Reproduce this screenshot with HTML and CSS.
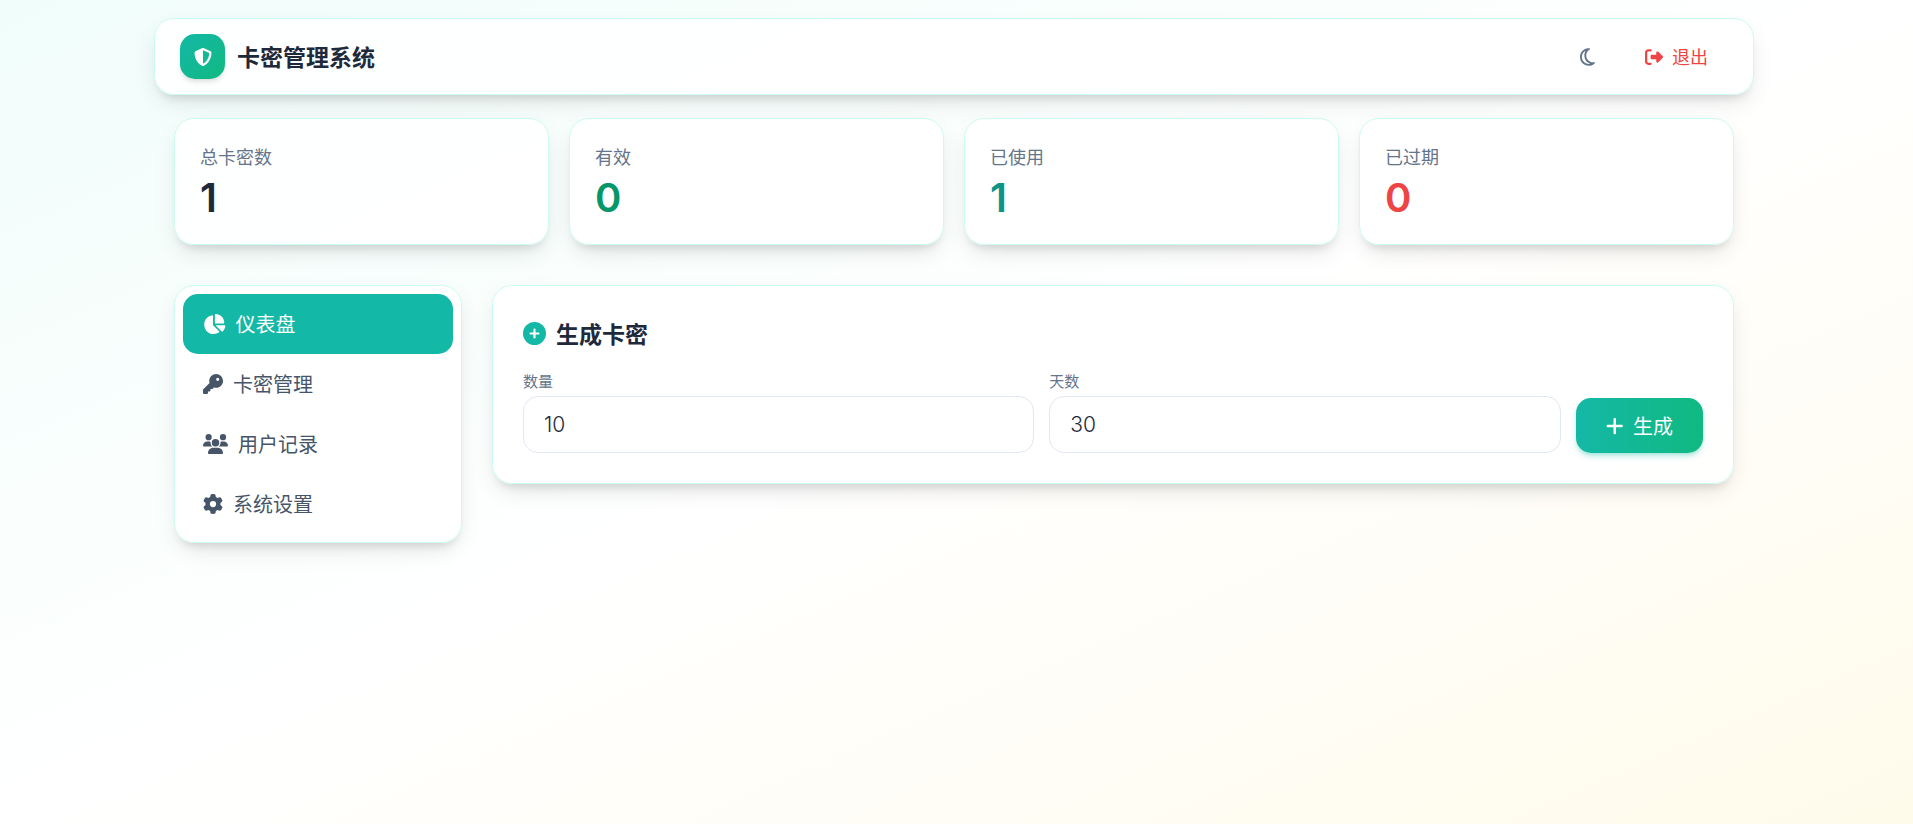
FILE: index.html
```
<!DOCTYPE html>
<html lang="zh-CN">

<head>
    <meta charset="UTF-8">
    <meta name="viewport" content="width=device-width, initial-scale=1.0">
    <title>卡密管理系统</title>
    <link rel="stylesheet" href="styles.css">
</head>

<body>
    <!-- Header -->
    <header class="header card">
        <div class="brand">
            <span class="logo">
                <svg class="icon" viewBox="0 0 512 512"><path d="M256 0c4.6 0 9.2 1 13.4 2.9L457.7 82.8c22 9.3 38.4 31 38.3 57.2c-.5 99.2-41.3 280.7-213.6 363.2c-16.7 8-36.1 8-52.8 0C57.3 420.7 16.5 239.2 16 140c-.1-26.2 16.3-47.9 38.3-57.2L242.7 2.9C246.8 1 251.4 0 256 0zm0 66.8V444.8C394 378 431.1 230.1 432 141.4L256 66.8l0 0z"/></svg>
            </span>
            <h1>卡密管理系统</h1>
        </div>
        <div class="actions">
            <button class="theme-btn" id="themeBtn" aria-label="切换主题">
                <svg class="icon" viewBox="0 0 384 512"><path d="M144.7 98.7c-21 34.1-33.1 74.3-33.1 117.3c0 98 62.8 181.4 150.4 211.7c-12.4 2.8-25.3 4.3-38.6 4.3C126.6 432 48 353.3 48 256c0-68.9 39.4-128.4 96.8-157.3zm62.1-66C91.1 41.2 0 137.9 0 256C0 379.7 100 480 223.5 480c47.8 0 92-15 128.4-40.6c1.9-1.3 3.7-2.7 5.5-4c4.8-3.6 9.4-7.4 13.9-11.4c2.7-2.4 5.3-4.8 7.9-7.3c5-4.9 6.3-12.5 3.1-18.7s-10.1-9.7-17-8.5c-3.7 .6-7.4 1.2-11.1 1.6c-5 .5-10.1 .9-15.3 1c-1.2 0-2.5 0-3.7 0l-.3 0c-96.8-.2-175.2-78.9-175.2-176c0-54.8 24.9-103.7 64.1-136c1-.9 2.1-1.7 3.2-2.6c4-3.2 8.2-6.2 12.5-9c3.1-2 6.3-4 9.6-5.8c6.1-3.5 9.2-10.5 7.7-17.3s-7.3-11.9-14.3-12.5c-3.6-.3-7.1-.5-10.7-.6c-2.7-.1-5.5-.1-8.2-.1c-3.3 0-6.5 .1-9.8 .2c-2.3 .1-4.6 .2-6.9 .4z"/></svg>
            </button>
            <button class="logout-btn" id="logoutBtn">
                <svg class="icon" viewBox="0 0 512 512"><path d="M377.9 105.9L500.7 228.7c7.2 7.2 11.3 17.1 11.3 27.3s-4.1 20.1-11.3 27.3L377.9 406.1c-6.4 6.4-15 9.9-24 9.9c-18.7 0-33.9-15.2-33.9-33.9l0-62.1-128 0c-17.7 0-32-14.3-32-32l0-64c0-17.7 14.3-32 32-32l128 0 0-62.1c0-18.7 15.2-33.9 33.9-33.9c9 0 17.6 3.6 24 9.9zM160 96L96 96c-17.7 0-32 14.3-32 32l0 256c0 17.7 14.3 32 32 32l64 0c17.7 0 32 14.3 32 32s-14.3 32-32 32l-64 0c-53 0-96-43-96-96L0 128C0 75 43 32 96 32l64 0c17.7 0 32 14.3 32 32s-14.3 32-32 32z"/></svg>
                退出
            </button>
        </div>
    </header>

    <main class="container">
        <!-- Stats -->
        <section class="stats">
            <div class="stat card">
                <p>总卡密数</p>
                <strong>1</strong>
            </div>
            <div class="stat card">
                <p>有效</p>
                <strong class="green">0</strong>
            </div>
            <div class="stat card">
                <p>已使用</p>
                <strong class="teal">1</strong>
            </div>
            <div class="stat card">
                <p>已过期</p>
                <strong class="red">0</strong>
            </div>
        </section>

        <div class="layout">
            <!-- Sidebar -->
            <nav class="sidebar card">
                <a href="#dashboard" class="active">
                    <svg class="icon" viewBox="0 0 576 512"><path d="M304 240V16.6c0-9 7-16.6 16-16.6C443.7 0 544 100.3 544 224c0 9-7.6 16-16.6 16H304zM32 272C32 150.7 122.1 50.3 239 34.3c9.2-1.3 17 6.1 17 15.4V288L412.5 444.5c6.7 6.7 6.2 17.7-1.5 23.1C371.8 495.6 323.8 512 272 512C139.5 512 32 404.6 32 272zm526.4 16c9.3 0 16.6 7.8 15.4 17c-7.7 55.9-34.6 105.6-73.9 142.3c-6 5.6-15.4 5.2-21.2-.7L320 288H558.4z"/></svg>
                    仪表盘
                </a>
                <a href="#cards">
                    <svg class="icon" viewBox="0 0 512 512"><path d="M336 352c97.2 0 176-78.8 176-176S433.2 0 336 0S160 78.8 160 176c0 18.7 2.9 36.8 8.3 53.7L7 391c-4.5 4.5-7 10.6-7 17v80c0 13.3 10.7 24 24 24h80c13.3 0 24-10.7 24-24V448h40c13.3 0 24-10.7 24-24V384h40c6.4 0 12.5-2.5 17-7l33.3-33.3c16.9 5.4 35 8.3 53.7 8.3zM376 96a40 40 0 1 1 0 80 40 40 0 1 1 0-80z"/></svg>
                    卡密管理
                </a>
                <a href="#users">
                    <svg class="icon" viewBox="0 0 640 512"><path d="M144 0a80 80 0 1 1 0 160A80 80 0 1 1 144 0zM512 0a80 80 0 1 1 0 160A80 80 0 1 1 512 0zM0 298.7C0 239.8 47.8 192 106.7 192h42.7c15.9 0 31 3.5 44.6 9.7c-1.3 7.2-1.9 14.7-1.9 22.3c0 38.2 16.8 72.5 43.3 96c-.2 0-.4 0-.7 0H21.3C9.6 320 0 310.4 0 298.7zM405.3 320c-.2 0-.4 0-.7 0c26.6-23.5 43.3-57.8 43.3-96c0-7.6-.7-15-1.9-22.3c13.6-6.3 28.7-9.7 44.6-9.7h42.7C592.2 192 640 239.8 640 298.7c0 11.8-9.6 21.3-21.3 21.3H405.3zM224 224a96 96 0 1 1 192 0 96 96 0 1 1 -192 0zM128 485.3C128 411.7 187.7 352 261.3 352H378.7C452.3 352 512 411.7 512 485.3c0 14.7-11.9 26.7-26.7 26.7H154.7c-14.7 0-26.7-11.9-26.7-26.7z"/></svg>
                    用户记录
                </a>
                <a href="#settings">
                    <svg class="icon" viewBox="0 0 512 512"><path d="M495.9 166.6c3.2 8.7 .5 18.4-6.4 24.6l-43.3 39.4c1.1 8.3 1.7 16.8 1.7 25.4s-.6 17.1-1.7 25.4l43.3 39.4c6.9 6.2 9.6 15.9 6.4 24.6c-4.4 11.9-9.7 23.3-15.8 34.3l-4.7 8.1c-6.6 11-14 21.4-22.1 31.2c-5.9 7.2-15.7 9.6-24.5 6.8l-55.7-17.7c-13.4 10.3-28.2 18.9-44 25.4l-12.5 57.1c-2 9.1-9 16.3-18.2 17.8c-13.8 2.3-28 3.5-42.5 3.5s-28.7-1.2-42.5-3.5c-9.2-1.5-16.2-8.7-18.2-17.8l-12.5-57.1c-15.8-6.5-30.6-15.1-44-25.4L83.1 425.9c-8.8 2.8-18.6 .3-24.5-6.8c-8.1-9.8-15.5-20.2-22.1-31.2l-4.7-8.1c-6.1-11-11.4-22.4-15.8-34.3c-3.2-8.7-.5-18.4 6.4-24.6l43.3-39.4C64.6 273.1 64 264.6 64 256s.6-17.1 1.7-25.4L22.4 191.2c-6.9-6.2-9.6-15.9-6.4-24.6c4.4-11.9 9.7-23.3 15.8-34.3l4.7-8.1c6.6-11 14-21.4 22.1-31.2c5.9-7.2 15.7-9.6 24.5-6.8l55.7 17.7c13.4-10.3 28.2-18.9 44-25.4l12.5-57.1c2-9.1 9-16.3 18.2-17.8C227.3 1.2 241.5 0 256 0s28.7 1.2 42.5 3.5c9.2 1.5 16.2 8.7 18.2 17.8l12.5 57.1c15.8 6.5 30.6 15.1 44 25.4l55.7-17.7c8.8-2.8 18.6-.3 24.5 6.8c8.1 9.8 15.5 20.2 22.1 31.2l4.7 8.1c6.1 11 11.4 22.4 15.8 34.3zM256 336a80 80 0 1 0 0-160 80 80 0 1 0 0 160z"/></svg>
                    系统设置
                </a>
            </nav>

            <!-- Generate form -->
            <section class="panel card">
                <h2>
                    <svg class="icon" viewBox="0 0 512 512"><path d="M256 512A256 256 0 1 0 256 0a256 256 0 1 0 0 512zM232 344V280H168c-13.3 0-24-10.7-24-24s10.7-24 24-24h64V168c0-13.3 10.7-24 24-24s24 10.7 24 24v64h64c13.3 0 24 10.7 24 24s-10.7 24-24 24H280v64c0 13.3-10.7 24-24 24s-24-10.7-24-24z"/></svg>
                    生成卡密
                </h2>
                <form class="generate-form" id="generateForm">
                    <div class="field">
                        <label for="count">数量</label>
                        <input type="text" inputmode="numeric" id="count" name="count" value="10">
                    </div>
                    <div class="field">
                        <label for="days">天数</label>
                        <input type="text" inputmode="numeric" id="days" name="days" value="30">
                    </div>
                    <button type="submit" class="generate-btn">
                        <svg class="icon" viewBox="0 0 448 512"><path d="M256 80c0-17.7-14.3-32-32-32s-32 14.3-32 32V224H48c-17.7 0-32 14.3-32 32s14.3 32 32 32H192V432c0 17.7 14.3 32 32 32s32-14.3 32-32V288H400c17.7 0 32-14.3 32-32s-14.3-32-32-32H256V80z"/></svg>
                        生成
                    </button>
                </form>
            </section>
        </div>
    </main>
</body>

</html>
```
FILE: styles.css
```
* {
    margin: 0;
    padding: 0;
    box-sizing: border-box;
}

body {
    min-height: 100vh;
    padding: 18px 5px 18px 0;
    font-family: 'Noto Sans CJK SC', sans-serif;
    font-size: 20px;
    line-height: 30px;
    color: #1e293b;
    background: linear-gradient(to bottom right, #f0fdfa, #ffffff, #fffbeb) no-repeat;
}

button,
input {
    font: inherit;
    color: inherit;
}

button {
    display: flex;
    align-items: center;
    justify-content: center;
    border: none;
    background: none;
    cursor: pointer;
}

.icon {
    height: 20px;
    flex-shrink: 0;
    fill: currentColor;
}

.card {
    background-color: rgba(255, 255, 255, 0.9);
    border: 1px solid #ccfbf1;
    border-radius: 20px;
    box-shadow: 0 10px 25px -5px rgba(0, 0, 0, 0.12), 0 8px 10px -6px rgba(0, 0, 0, 0.12);
}

/* Header */
.header {
    display: flex;
    align-items: center;
    justify-content: space-between;
    max-width: 1600px;
    margin: 0 auto 23px;
    padding: 15px 25px;
}

.brand {
    display: flex;
    align-items: center;
    gap: 12px;
}

.logo {
    display: flex;
    align-items: center;
    justify-content: center;
    width: 45px;
    height: 45px;
    color: white;
    background: linear-gradient(to bottom right, #14b8a6, #10b981);
    border-radius: 15px;
    box-shadow: 0 4px 6px -1px rgba(0, 0, 0, 0.1), 0 2px 4px -2px rgba(0, 0, 0, 0.1);
}

.logo .icon,
.logout-btn .icon {
    height: 18px;
}

h1,
h2 {
    font-size: 23px;
    font-weight: 700;
    line-height: 35px;
}

.actions {
    display: flex;
    align-items: center;
    gap: 15px;
}

.theme-btn {
    width: 45px;
    height: 45px;
    color: #64748b;
}

.logout-btn {
    gap: 9px;
    padding: 10px 20px;
    font-size: 18px;
    line-height: 25px;
    color: #ef4444;
}

.container {
    max-width: 1600px;
    margin: 0 auto;
    padding: 0 20px;
}

/* Stats */
.stats {
    display: grid;
    grid-template-columns: repeat(4, 1fr);
    gap: 20px;
    margin-bottom: 40px;
}

.stat {
    padding: 25px;
}

.stat p {
    margin-bottom: 8px;
    font-size: 18px;
    line-height: 25px;
    color: #64748b;
}

.stat strong {
    display: block;
    font-family: Inter, sans-serif;
    font-size: 40px;
    font-weight: 600;
    line-height: 42px;
}

.stat .green {
    color: #059669;
}

.stat .teal {
    color: #0d9488;
}

.stat .red {
    color: #ef4444;
}

.layout {
    display: grid;
    grid-template-columns: repeat(5, 1fr);
    gap: 30px;
    align-items: start;
}

/* Sidebar */
.sidebar {
    padding: 8px;
}

.sidebar a {
    display: flex;
    align-items: center;
    gap: 10px;
    padding: 15px 20px;
    color: #475569;
    text-decoration: none;
    border-radius: 15px;
}

.sidebar a.active {
    color: white;
    background-color: #14b8a6;
}

/* Generate form */
.panel {
    grid-column: span 4;
    padding: 30px;
}

.panel h2 {
    display: flex;
    align-items: center;
    gap: 10px;
    margin-bottom: 20px;
}

.panel h2 .icon {
    height: 23px;
    color: #14b8a6;
}

.generate-form {
    display: flex;
    align-items: flex-end;
    gap: 15px;
}

.field {
    flex: 1;
}

.field label {
    display: block;
    margin-bottom: 5px;
    font-size: 15px;
    line-height: 20px;
    color: #64748b;
}

.field input {
    display: block;
    width: 100%;
    height: 57px;
    padding: 0 20px;
    font-family: Inter, sans-serif;
    font-size: 21px;
    font-weight: 300;
    background-color: white;
    border: 1px solid #e2e8f0;
    border-radius: 15px;
    outline: none;
}

.generate-btn {
    gap: 10px;
    height: 55px;
    padding: 0 30px;
    color: white;
    background: linear-gradient(to right, #14b8a6, #10b981);
    border-radius: 15px;
    box-shadow: 0 4px 6px -1px rgba(20, 184, 166, 0.3), 0 2px 4px -2px rgba(20, 184, 166, 0.3);
}
```
